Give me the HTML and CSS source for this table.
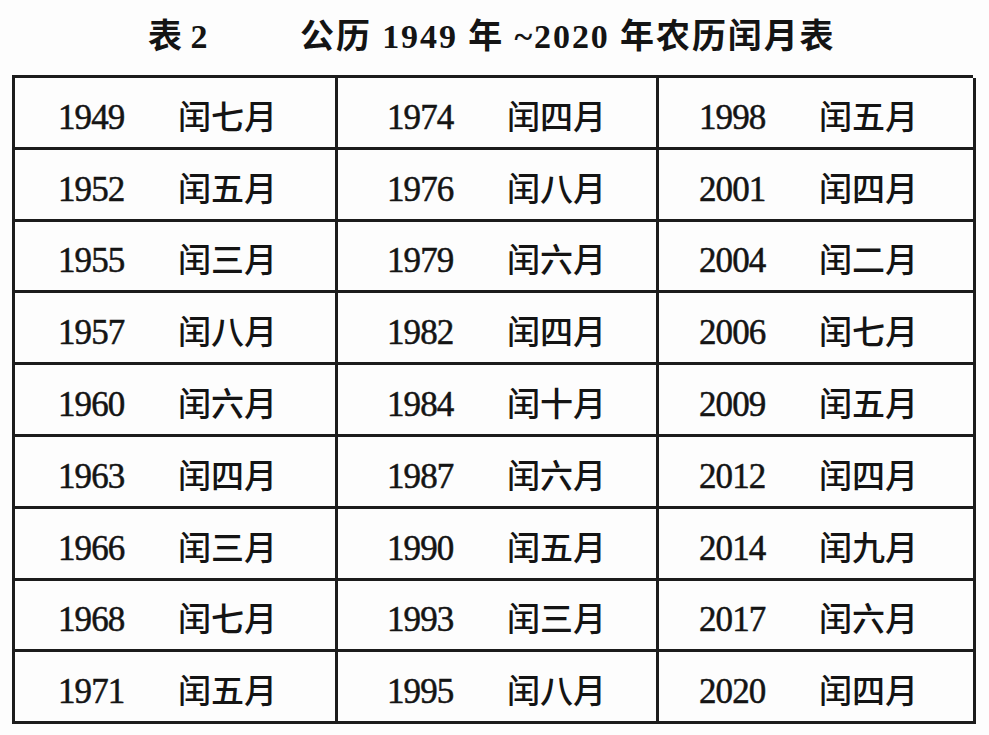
FILE: index.html
```html
<!DOCTYPE html>
<html lang="zh-CN">
<head>
<meta charset="utf-8">
<title>公历1949年~2020年农历闰月表</title>
<link rel="stylesheet" href="styles.css">
</head>
<body>
<div class="page">
  <h1 class="title"><span class="tno">表 2</span><span class="tname">公历 1949 年 ~2020 年农历闰月表</span></h1>
  <div class="table">
    <div class="cell"><span class="yr">1949</span><span class="lm">闰七月</span></div>
    <div class="cell"><span class="yr">1974</span><span class="lm">闰四月</span></div>
    <div class="cell"><span class="yr">1998</span><span class="lm">闰五月</span></div>

    <div class="cell"><span class="yr">1952</span><span class="lm">闰五月</span></div>
    <div class="cell"><span class="yr">1976</span><span class="lm">闰八月</span></div>
    <div class="cell"><span class="yr">2001</span><span class="lm">闰四月</span></div>

    <div class="cell"><span class="yr">1955</span><span class="lm">闰三月</span></div>
    <div class="cell"><span class="yr">1979</span><span class="lm">闰六月</span></div>
    <div class="cell"><span class="yr">2004</span><span class="lm">闰二月</span></div>

    <div class="cell"><span class="yr">1957</span><span class="lm">闰八月</span></div>
    <div class="cell"><span class="yr">1982</span><span class="lm">闰四月</span></div>
    <div class="cell"><span class="yr">2006</span><span class="lm">闰七月</span></div>

    <div class="cell"><span class="yr">1960</span><span class="lm">闰六月</span></div>
    <div class="cell"><span class="yr">1984</span><span class="lm">闰十月</span></div>
    <div class="cell"><span class="yr">2009</span><span class="lm">闰五月</span></div>

    <div class="cell"><span class="yr">1963</span><span class="lm">闰四月</span></div>
    <div class="cell"><span class="yr">1987</span><span class="lm">闰六月</span></div>
    <div class="cell"><span class="yr">2012</span><span class="lm">闰四月</span></div>

    <div class="cell"><span class="yr">1966</span><span class="lm">闰三月</span></div>
    <div class="cell"><span class="yr">1990</span><span class="lm">闰五月</span></div>
    <div class="cell"><span class="yr">2014</span><span class="lm">闰九月</span></div>

    <div class="cell"><span class="yr">1968</span><span class="lm">闰七月</span></div>
    <div class="cell"><span class="yr">1993</span><span class="lm">闰三月</span></div>
    <div class="cell"><span class="yr">2017</span><span class="lm">闰六月</span></div>

    <div class="cell"><span class="yr">1971</span><span class="lm">闰五月</span></div>
    <div class="cell"><span class="yr">1995</span><span class="lm">闰八月</span></div>
    <div class="cell"><span class="yr">2020</span><span class="lm">闰四月</span></div>
  </div>
</div>
</body>
</html>
```

FILE: styles.css
```css
html, body {
  margin: 0;
  padding: 0;
  background: #fdfdfd;
}

.page {
  width: 989px;
  height: 735px;
  padding: 0 0 0 12px;
  box-sizing: border-box;
  color: #141414;
}

.title {
  margin: 0;
  height: 75px;
  display: flex;
  align-items: center;
  padding: 0 0 2px 136px;
  box-sizing: border-box;
  font-family: "Liberation Serif", "Noto Sans CJK SC", serif;
  font-size: 34px;
  font-weight: 700;
  line-height: 1;
  white-space: pre;
}

.tno {
  width: 152px;
  flex: none;
}

.tname {
  flex: none;
  letter-spacing: 1.9px;
}

.table {
  width: 961px;
  display: grid;
  grid-template-columns: 323px 321px 317px;
  grid-template-rows: repeat(9, 71.8px);
  border-top: 3px solid #1c1c1c;
  border-left: 3px solid #1c1c1c;
  box-sizing: border-box;
}

.cell {
  display: flex;
  align-items: center;
  border-right: 3px solid #1c1c1c;
  border-bottom: 3px solid #1c1c1c;
  padding-top: 6px;
  padding-left: 43px;
  box-sizing: border-box;
}

.cell:nth-child(3n+2) {
  padding-left: 49px;
}

.cell:nth-child(3n) {
  padding-left: 40px;
}

.yr {
  width: 120px;
  flex: none;
  padding-top: 5px;
  font-family: "Liberation Serif", serif;
  font-size: 35px;
  letter-spacing: -0.9px;
  -webkit-text-stroke: 0.5px #141414;
}

.lm {
  font-family: "Noto Sans CJK SC", sans-serif;
  font-size: 33px;
  font-weight: 500;
  line-height: 1;
}
```
